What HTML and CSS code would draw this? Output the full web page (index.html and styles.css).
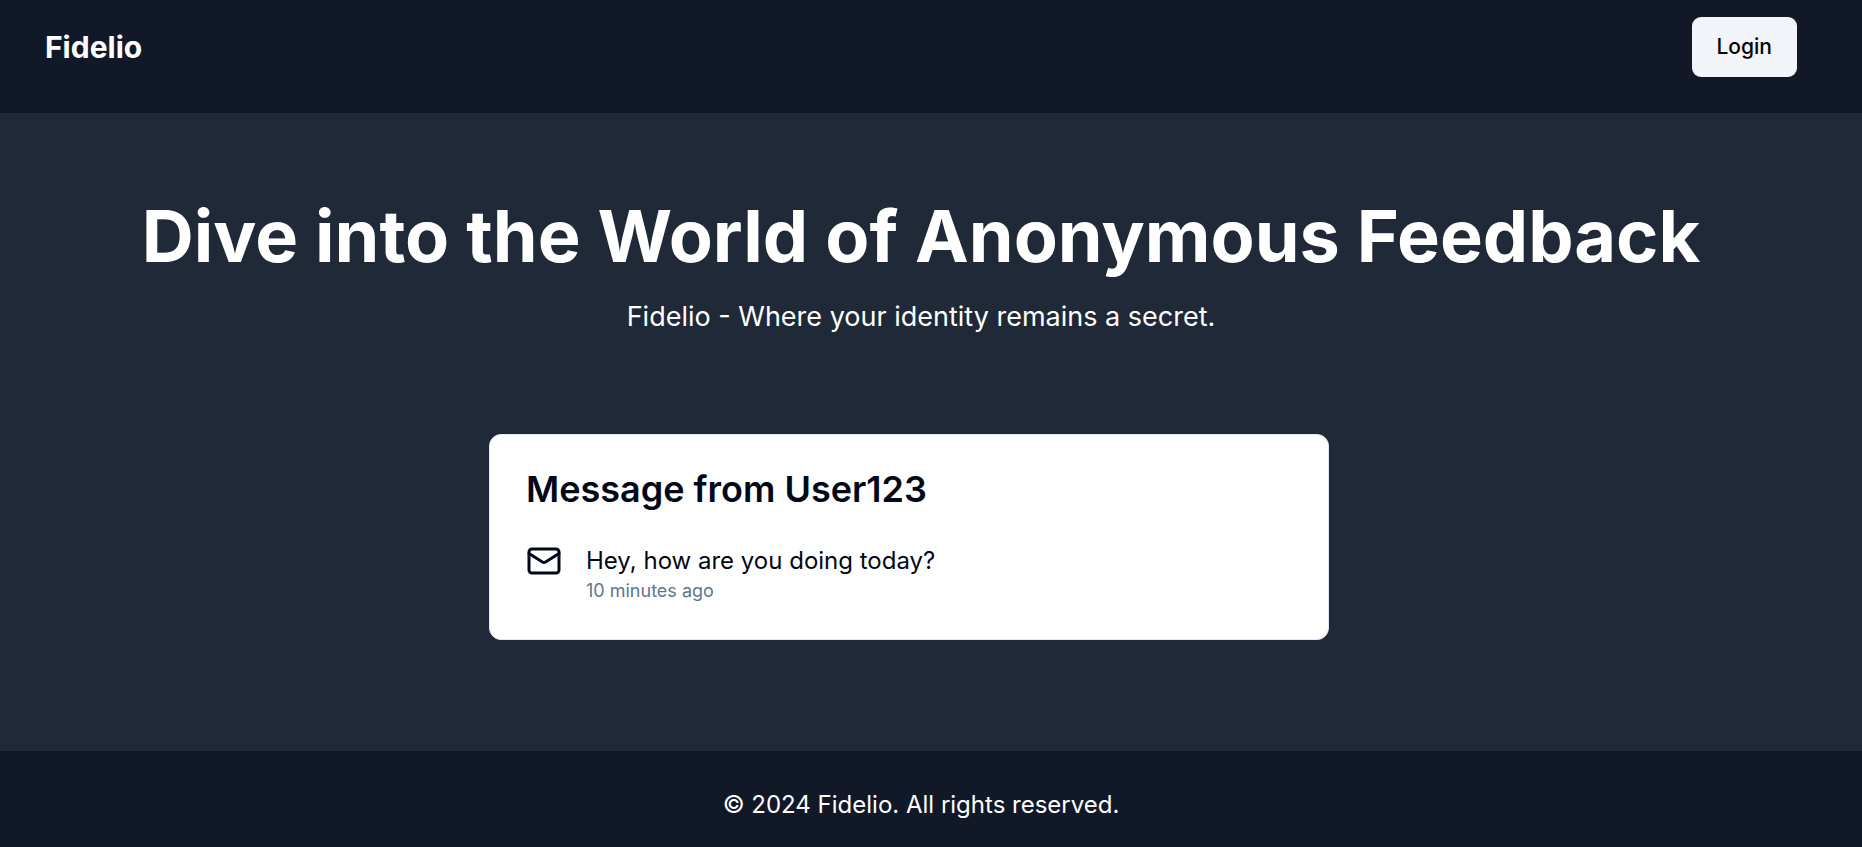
FILE: index.html
```html
<!DOCTYPE html>
<html lang="en">
<head>
<meta charset="utf-8">
<meta name="viewport" content="width=device-width, initial-scale=1">
<title>Fidelio</title>
<link rel="stylesheet" href="styles.css">
</head>
<body class="page">
<header class="navbar">
  <a class="brand" href="#">Fidelio</a>
  <button class="login" type="button">Login</button>
</header>
<main class="hero">
  <section class="intro">
    <h1 class="headline">Dive into the World of Anonymous Feedback</h1>
    <p class="tagline">Fidelio - Where your identity remains a secret.</p>
  </section>
  <div class="carousel">
    <article class="card">
      <h2 class="card-title">Message from User123</h2>
      <div class="card-body">
        <svg class="mail" viewBox="0 0 24 24" fill="none" stroke="currentColor" stroke-width="2" stroke-linecap="round" stroke-linejoin="round" aria-hidden="true">
          <rect width="20" height="16" x="2" y="4" rx="2"/>
          <path d="m22 7-8.97 5.7a1.94 1.94 0 0 1-2.06 0L2 7"/>
        </svg>
        <div>
          <p class="message">Hey, how are you doing today?</p>
          <p class="time">10 minutes ago</p>
        </div>
      </div>
    </article>
  </div>
</main>
<footer class="footer">© 2024 Fidelio. All rights reserved.</footer>
</body>
</html>
```
FILE: styles.css
```css
* {
  box-sizing: border-box;
  margin: 0;
}

.page {
  display: flex;
  flex-direction: column;
  min-height: 100vh;
  background: #1f2937;
  color: #fff;
  font-family: Inter, "Liberation Sans", sans-serif;
}

.navbar {
  display: flex;
  align-items: center;
  justify-content: space-between;
  padding: 17px 65px 36px 45px;
  background: #111827;
}

.brand {
  color: inherit;
  font-size: 30px;
  font-weight: 700;
  line-height: 42px;
  text-decoration: none;
}

.login {
  padding: 12px 25px;
  border: 0;
  border-radius: 9px;
  background: #f1f5f9;
  color: #000;
  font: inherit;
  font-size: 21px;
  font-weight: 500;
  line-height: 36px;
}

.hero {
  flex: 1;
  padding: 87px 20px 96px 0;
}

.intro {
  margin-bottom: 96px;
  text-align: center;
}

.headline {
  font-size: 72px;
  font-weight: 700;
  line-height: 72px;
}

.tagline {
  margin-top: 24px;
  font-size: 27px;
  line-height: 42px;
}

.carousel {
  display: flex;
  justify-content: center;
  padding-right: 24px;
}

.card {
  width: 100%;
  max-width: 840px;
  padding: 36px;
  border: 1px solid #e2e8f0;
  border-radius: 12px;
  background: #fff;
  color: #020817;
}

.card-title {
  font-size: 36px;
  font-weight: 600;
  line-height: 36px;
}

.card-body {
  display: flex;
  align-items: flex-start;
  gap: 24px;
  margin-top: 36px;
}

.mail {
  flex: none;
  width: 36px;
  height: 36px;
}

.message {
  font-size: 24px;
  line-height: 36px;
}

.time {
  color: #64748b;
  font-size: 18px;
  line-height: 24px;
}

.footer {
  padding: 36px 20px 24px 0;
  background: #111827;
  font-size: 24px;
  line-height: 36px;
  text-align: center;
}
```
